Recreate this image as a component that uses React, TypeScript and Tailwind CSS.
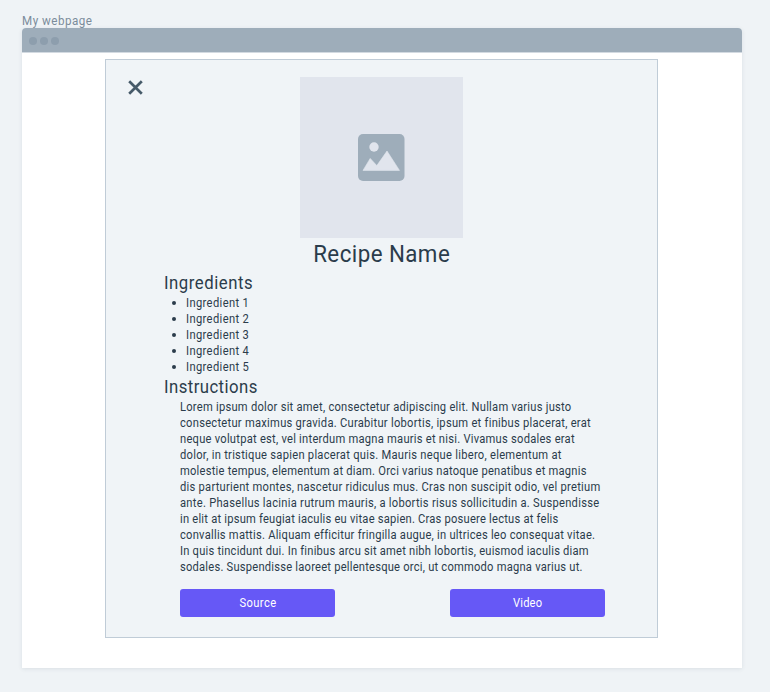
import { useLayoutEffect, useRef, useState } from "react";

type FitProps = { text: string; width: number; className?: string };

const CONDENSE = 0.93;

// One line of condensed text whose tracking is adjusted so that it spans a given width.
function FitText({ text, width, className = "origin-left" }: FitProps) {
  const ref = useRef<HTMLSpanElement>(null);
  const [tracking, setTracking] = useState(0);
  useLayoutEffect(() => {
    if (ref.current) {
      const natural = ref.current.offsetWidth;
      setTracking((width / CONDENSE - natural) / text.length);
    }
  }, [text, width]);
  return (
    <span ref={ref} className={`inline-block scale-x-[0.93] whitespace-nowrap ${className}`} style={{ letterSpacing: `${tracking}px` }}>
      {text}
    </span>
  );
}

const ingredients = ["Ingredient 1", "Ingredient 2", "Ingredient 3", "Ingredient 4", "Ingredient 5"];

const instructions: [string, number][] = [
  ["Lorem ipsum dolor sit amet, consectetur adipiscing elit. Nullam varius justo", 391.5],
  ["consectetur maximus gravida. Curabitur lobortis, ipsum et finibus placerat, erat", 410.5],
  ["neque volutpat est, vel interdum magna mauris et nisi. Vivamus sodales erat", 395],
  ["dolor, in tristique sapien placerat quis. Mauris neque libero, elementum at", 382],
  ["molestie tempus, elementum at diam. Orci varius natoque penatibus et magnis", 407],
  ["dis parturient montes, nascetur ridiculus mus. Cras non suscipit odio, vel pretium", 420.5],
  ["ante. Phasellus lacinia rutrum mauris, a lobortis risus sollicitudin a. Suspendisse", 419.5],
  ["in elit at ipsum feugiat iaculis eu vitae sapien. Cras posuere lectus at felis", 378.5],
  ["convallis mattis. Aliquam efficitur fringilla augue, in ultrices leo consequat vitae.", 414],
  ["In quis tincidunt dui. In finibus arcu sit amet nibh lobortis, euismod iaculis diam", 408.5],
  ["sodales. Suspendisse laoreet pellentesque orci, ut commodo magna varius ut.", 402.5],
];

function TitleBar() {
  return (
    <div className="flex h-[25px] items-center gap-[3px] rounded-t-[4px] border-b border-[#d3dae1] bg-[#9eadba] pl-[7px] pt-px">
      <span className="size-2 rounded-full bg-[#8d9ead]" />
      <span className="size-2 rounded-full bg-[#8d9ead]" />
      <span className="size-2 rounded-full bg-[#8d9ead]" />
    </div>
  );
}

function ImagePlaceholder() {
  return (
    <div className="ml-[194px] flex h-[161px] w-[163px] items-center justify-center bg-[#e1e5ed]">
      <svg className="mr-px size-[47px]" viewBox="0 0 47 47">
        <rect width="46.5" height="47" rx="5" fill="#9eadba" />
        <circle cx="16" cy="13" r="4.7" fill="#e1e5ed" />
        <path d="M5 36.4 12.2 24.4 18.8 31.6 29 17 41.5 36.4z" fill="#e1e5ed" stroke="#e1e5ed" strokeWidth=".6" strokeLinejoin="round" />
      </svg>
    </div>
  );
}

function ActionButton({ label, width }: { label: string; width: number }) {
  return (
    <button className="flex h-7 w-[155px] items-center justify-center rounded-[3px] bg-[#6658f6] text-white">
      <FitText text={label} width={width} className="origin-center" />
    </button>
  );
}

export default function App() {
  return (
    <div className="h-[692px] w-[770px] overflow-hidden bg-[#eff3f6] pl-[22px] pt-3 font-['Roboto',sans-serif] text-[12px] leading-4 text-[#2b3c4b]">
      <div className="flex h-4 items-center pt-[2px] text-[#7b8c9b]">
        <FitText text="My webpage" width={70} className="origin-left text-[12.5px]" />
      </div>
      <main className="h-[640px] w-[720px] rounded-t-[4px] bg-white shadow-[0_1px_4px_rgba(40,60,80,0.1)]">
        <TitleBar />
        <section className="relative ml-[83px] mt-[6px] h-[579px] w-[553px] border border-[#c0ccd7] bg-[#f0f4f7] pt-[17px]">
          <button aria-label="Close" className="absolute left-[22px] top-5">
            <svg className="size-[15px]" viewBox="0 0 15 15" fill="none" stroke="#465a69" strokeWidth="2.7">
              <path d="M1.2 1.2 13.8 13.8M13.8 1.2 1.2 13.8" />
            </svg>
          </button>
          <ImagePlaceholder />
          <h1 className="ml-[194px] flex h-8 w-[163px] items-center justify-center text-[24px]">
            <FitText text="Recipe Name" width={137} className="origin-center" />
          </h1>
          <h2 className="ml-[57.5px] mt-[2px] flex h-[22px] items-center text-[18px]">
            <FitText text="Ingredients" width={89.5} />
          </h2>
          <ul className="ml-[66px] mt-px">
            {ingredients.map((name) => (
              <li key={name} className="flex h-4 items-center">
                <span className="mr-[9.5px] size-1 rounded-full bg-[#2b3c4b]" />
                <FitText text={name} width={63} />
              </li>
            ))}
          </ul>
          <h2 className="ml-[57.5px] flex h-6 items-center text-[18px]">
            <FitText text="Instructions" width={93.5} />
          </h2>
          <div className="ml-[74px]">
            {instructions.map(([line, width]) => (
              <div key={line} className="flex h-4 items-center">
                <FitText text={line} width={width} />
              </div>
            ))}
          </div>
          <div className="ml-[74px] mt-[14px] flex gap-[115px]">
            <ActionButton label="Source" width={37} />
            <ActionButton label="Video" width={29.5} />
          </div>
        </section>
      </main>
    </div>
  );
}
